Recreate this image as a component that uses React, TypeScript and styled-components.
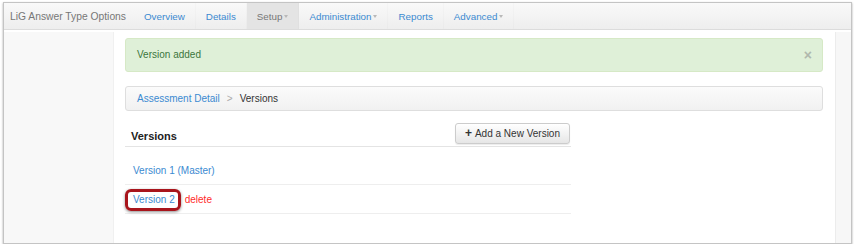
import React from 'react';
import styled, { createGlobalStyle } from 'styled-components';

const GlobalStyle = createGlobalStyle`
  html, body {
    margin: 0;
    padding: 0;
    background: #ffffff;
  }
  body {
    font-family: 'Liberation Sans', Arial, sans-serif;
    font-size: 10px;
    color: #333333;
  }
`;

const Frame = styled.div`
  margin: 2px 0 0 3px;
  width: 849px;
  height: 242px;
  border: 1px solid #c4c4c4;
  box-shadow: 0 1px 2px rgba(0, 0, 0, 0.35);
  background: #ffffff;
  display: flex;
  flex-direction: column;
  overflow: hidden;
  box-sizing: border-box;
`;

const NavBar = styled.div`
  height: 26px;
  display: flex;
  align-items: stretch;
  background: linear-gradient(#f9f9f9, #eeeeee);
  border-bottom: 1px solid #dcdcdc;
  flex-shrink: 0;
`;

const Brand = styled.div`
  display: flex;
  align-items: center;
  padding: 0 8px 0 6px;
  font-size: 10.3px;
  color: #777777;
`;

const NavItem = styled.div<{ active?: boolean }>`
  display: flex;
  align-items: center;
  padding: 0 10px;
  color: ${(p) => (p.active ? '#777777' : '#3b8ad1')};
  background: ${(p) => (p.active ? '#e4e4e4' : 'transparent')};
  border-right: 1px solid rgba(0, 0, 0, 0.015);
  font-size: 9.8px;
`;

const Caret = styled.span`
  display: inline-block;
  width: 0;
  height: 0;
  margin-left: 2px;
  margin-top: 1px;
  border-left: 2.5px solid transparent;
  border-right: 2.5px solid transparent;
  border-top: 3px solid #b9b9b9;
`;

const Body = styled.div`
  flex: 1;
  display: flex;
  margin-top: 2px;
`;

const Sidebar = styled.div`
  width: 109px;
  background: #f8f8f8;
  border-right: 1px solid #f0f0f0;
`;

const Main = styled.div`
  flex: 1;
  background: #ffffff;
  padding: 6px 12px 0 11px;
`;

const RightStrip = styled.div`
  width: 15px;
  background: #f7f7f7;
  border-left: 1px solid #ececec;
`;

const Alert = styled.div`
  height: 34px;
  box-sizing: border-box;
  display: flex;
  align-items: center;
  justify-content: space-between;
  padding: 0 10px 2px 11px;
  background: #dff0d8;
  border: 1px solid #d6e9c6;
  border-radius: 3px;
  color: #3c763d;
  font-size: 10px;
`;

const Close = styled.span`
  color: #b0b8ad;
  font-size: 14px;
  font-weight: bold;
  line-height: 1;
  margin-top: 2px;
`;

const Breadcrumb = styled.div`
  margin-top: 14px;
  height: 25px;
  box-sizing: border-box;
  display: flex;
  align-items: center;
  padding: 0 11px;
  background: linear-gradient(#fbfbfb, #f1f1f1);
  border: 1px solid #dedede;
  border-radius: 3px;
  font-size: 10px;
  color: #333333;
`;

const Crumb = styled.span`
  color: #3b8ad1;
`;

const Sep = styled.span`
  color: #aaaaaa;
  margin: 0 7px;
`;

const Section = styled.div`
  width: 446px;
  margin-top: 11px;
`;

const SectionHead = styled.div`
  display: flex;
  align-items: center;
  justify-content: space-between;
  padding: 0 1px 1px 6px;
  height: 23px;
  border-bottom: 1px solid #e4e4e4;
`;

const Heading = styled.h3`
  margin: 4px 0 0;
  font-size: 11px;
  font-weight: bold;
  color: #222222;
`;

const Button = styled.button`
  height: 21px;
  padding: 0 9px;
  font-family: 'Liberation Sans', Arial, sans-serif;
  font-size: 10px;
  color: #333333;
  background: linear-gradient(#ffffff, #e6e6e6);
  border: 1px solid #cccccc;
  border-radius: 3px;
  box-shadow: 0 1px 1px rgba(0, 0, 0, 0.08);
  display: flex;
  align-items: center;
  gap: 3px;
`;

const Plus = styled.span`
  font-weight: bold;
  font-size: 12px;
  line-height: 1;
  margin-top: -1px;
`;

const List = styled.div`
  padding-top: 9px;
`;

const Row = styled.div`
  height: 28px;
  display: flex;
  align-items: center;
  padding-left: 8px;
  border-bottom: 1px solid #eeeeee;
  font-size: 10px;
`;

const VersionLink = styled.span<{ marked?: boolean }>`
  color: #3b8ad1;
  position: relative;
  &::after {
    content: '';
    display: ${(p) => (p.marked ? 'block' : 'none')};
    position: absolute;
    left: -8px;
    top: -5px;
    width: 56px;
    height: 22px;
    border: 3px solid #a8151c;
    border-radius: 6px;
    box-shadow: 0 1px 3px rgba(0, 0, 0, 0.45);
    box-sizing: border-box;
  }
`;

const Delete = styled.span`
  color: #ff2b2b;
  margin-left: 10px;
`;

const versions = [
  { name: 'Version 1 (Master)', marked: false, deletable: false },
  { name: 'Version 2', marked: true, deletable: true },
];

export default function App() {
  return (
    <>
      <GlobalStyle />
      <Frame>
        <NavBar>
          <Brand>LiG Answer Type Options</Brand>
          <NavItem>Overview</NavItem>
          <NavItem>Details</NavItem>
          <NavItem active>
            Setup<Caret />
          </NavItem>
          <NavItem>
            Administration<Caret />
          </NavItem>
          <NavItem>Reports</NavItem>
          <NavItem>
            Advanced<Caret />
          </NavItem>
        </NavBar>
        <Body>
          <Sidebar />
          <Main>
            <Alert>
              <span>Version added</span>
              <Close>×</Close>
            </Alert>
            <Breadcrumb>
              <Crumb>Assessment Detail</Crumb>
              <Sep>&gt;</Sep>
              <span>Versions</span>
            </Breadcrumb>
            <Section>
              <SectionHead>
                <Heading>Versions</Heading>
                <Button>
                  <Plus>+</Plus> Add a New Version
                </Button>
              </SectionHead>
              <List>
                {versions.map((v) => (
                  <Row key={v.name}>
                    <VersionLink marked={v.marked}>{v.name}</VersionLink>
                    {v.deletable && <Delete>delete</Delete>}
                  </Row>
                ))}
              </List>
            </Section>
          </Main>
          <RightStrip />
        </Body>
      </Frame>
    </>
  );
}
